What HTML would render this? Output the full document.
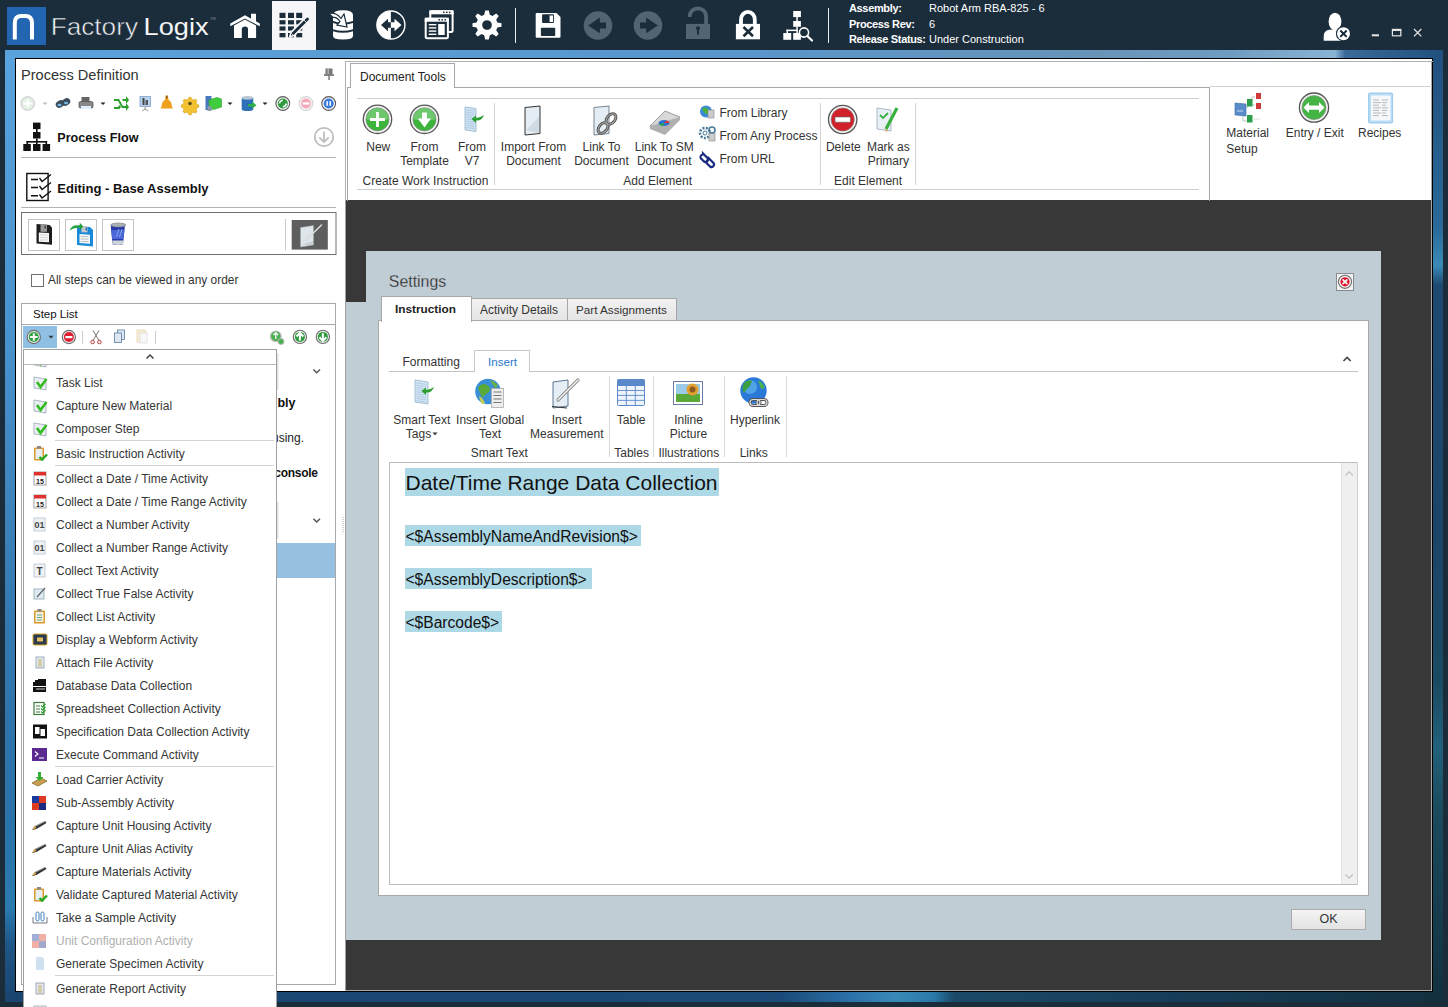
<!DOCTYPE html>
<html><head><meta charset="utf-8">
<style>
*{margin:0;padding:0;box-sizing:border-box}
html,body{width:1448px;height:1007px;overflow:hidden}
body{position:relative;background:#1b2d3b;font-family:"Liberation Sans",sans-serif;color:#222}
.a{position:absolute}
.t{position:absolute;white-space:nowrap;line-height:1}
svg{position:absolute;overflow:visible}
</style></head><body>

<!-- ===== TOP BAR ===== -->
<div class="a" style="left:7px;top:7px;width:39px;height:38px;background:#2265b1"></div>
<svg style="left:7px;top:7px" width="39" height="38"><path d="M7.8 32.6V16Q7.8 9 14.5 9H18.3Q25 9 25 16V32.6" fill="none" stroke="#fff" stroke-width="4"/></svg>
<svg style="left:0;top:0" width="230" height="50"><text x="50.7" y="35.2" font-family="Liberation Sans" font-size="24" textLength="87.3" lengthAdjust="spacingAndGlyphs" fill="#f0f3f5" stroke="#1b2d3b" stroke-width="0.55" style="paint-order:normal">Factory</text><text x="143.6" y="35.2" font-family="Liberation Sans" font-size="24" textLength="65" lengthAdjust="spacingAndGlyphs" fill="#f4f6f8">Logix</text><text x="210" y="20" font-family="Liberation Sans" font-size="4" fill="#889">TM</text></svg>

<div class="a" style="left:272px;top:1px;width:44px;height:49px;background:#f6f6f9"></div>


<!-- home -->
<svg style="left:0;top:0" width="1448" height="50">
<g fill="#fff">
<path d="M251 13.8h5v8l-5-2.6z"/>
<path d="M230.3 23.6L245 15.3L259.8 23.6L259.8 26.3L245 18.4L230.3 26.3z"/>
<path d="M234 25.5L245 19.6L256.1 25.5V38H248V29Q248 26.4 245 26.4Q241.8 26.4 241.8 29V38H234z"/>
</g>
<!-- grid pencil -->
<g fill="#1b2d3b">
<rect x="279.5" y="12.8" width="6" height="5.2"/><rect x="288" y="12.8" width="6" height="5.2"/><rect x="296.2" y="12.8" width="6" height="5.2"/>
<rect x="279.5" y="20.2" width="6" height="4.2"/><rect x="288" y="20.2" width="6" height="4.2"/><rect x="296.2" y="20.2" width="6" height="4.2"/>
<rect x="279.5" y="26.4" width="6" height="4.2"/><rect x="288" y="26.4" width="6" height="4.2"/><rect x="296.2" y="26.4" width="6" height="4.2"/>
<rect x="279.5" y="33" width="6" height="4.3"/><rect x="288" y="33" width="6" height="4.3"/><rect x="296.2" y="33" width="6" height="4.3"/>
</g>
<path d="M289.6 37L291.2 32.1L305.9 17.4Q307.5 16 309.1 17.4Q310.5 19 309.1 20.6L294.4 35.3z" fill="#1b2d3b" stroke="#f6f6f9" stroke-width="1.6" stroke-linejoin="round"/>
<path d="M303.6 19.7L306.8 22.9" stroke="#f6f6f9" stroke-width="0.9"/>
<path d="M291.5 33.5L293 35" stroke="#f6f6f9" stroke-width="0.7"/>
<!-- database -->
<g fill="#fff">
<path d="M333 15Q333 10.3 343 10.3Q353 10.3 353 15V21Q343 24.5 333 21z"/>
<path d="M333 23Q343 26.5 353 23V29.3Q343 32.3 333 29.3z"/>
<path d="M333 31.3Q343 34.3 353 31.3V36Q353 39.5 343 39.5Q333 39.5 333 36z"/>
</g>
<path d="M329 13.5Q336 12 341 18.5L344 14L347 27L337 25L340 21.5Q337 17 333 17.5z" fill="#fff" stroke="#1b2d3b" stroke-width="1.2"/>
<!-- circle arrows -->
<circle cx="390.9" cy="25" r="14" fill="#1b2d3b" stroke="#fff" stroke-width="1.4"/>
<path d="M390.9 11A14 14 0 0 0 390.9 39z" fill="#fff"/>
<path d="M381 25L388 18.8V22.2H390.9V27.8H388V31.2z" fill="#1b2d3b"/>
<path d="M401.5 25L394.5 18.8V22.2H390.9V27.8H394.5V31.2z" fill="#fff"/>
<!-- windows -->
<rect x="430.3" y="11.3" width="22.3" height="20.7" rx="1.5" fill="none" stroke="#fff" stroke-width="2"/>
<rect x="429.3" y="10.3" width="24.3" height="4" fill="#fff"/>
<rect x="425.7" y="18.7" width="22.2" height="19.5" rx="1.5" fill="#1b2d3b" stroke="#fff" stroke-width="2"/>
<rect x="424.7" y="17.7" width="24.2" height="4" fill="#fff"/>
<g fill="#1b2d3b"><rect x="443" y="11.6" width="1.5" height="1.5"/><rect x="446" y="11.6" width="1.5" height="1.5"/><rect x="449" y="11.6" width="1.5" height="1.5"/>
<rect x="438.5" y="19" width="1.5" height="1.5"/><rect x="441.5" y="19" width="1.5" height="1.5"/><rect x="444.5" y="19" width="1.5" height="1.5"/></g>
<g fill="#fff"><rect x="428.8" y="24" width="7.5" height="1.4"/><rect x="428.8" y="27.2" width="7.5" height="1.4"/><rect x="428.8" y="30.4" width="7.5" height="1.4"/><rect x="428.8" y="33.6" width="7.5" height="1.4"/><rect x="438.2" y="24" width="6.5" height="11"/></g>
<!-- gear -->
<g transform="translate(487 25)">
<path fill="#fff" fill-rule="evenodd" d="M-1.8-14.5H1.8L2.8-10.2L5.5-9L9.2-11.5L11.7-9L9.2-5.3L10.4-2.6L14.5-1.8V1.8L10.4 2.6L9.2 5.3L11.7 9L9.2 11.5L5.5 9L2.8 10.2L1.8 14.5H-1.8L-2.8 10.2L-5.5 9L-9.2 11.5L-11.7 9L-9.2 5.3L-10.4 2.6L-14.5 1.8V-1.8L-10.4-2.6L-9.2-5.3L-11.7-9L-9.2-11.5L-5.5-9L-2.8-10.2z M0-4.8A4.8 4.8 0 1 0 0.01 -4.8z"/>
</g>
<!-- save -->
<path d="M535.7 14Q535.7 13 536.7 13H556.5L560.5 17V36.8Q560.5 37.8 559.5 37.8H536.7Q535.7 37.8 535.7 36.8z" fill="#fff"/>
<rect x="542.1" y="14.3" width="11.8" height="8.7" rx="0.8" fill="#1b2d3b"/>
<rect x="549.6" y="15.5" width="3.4" height="6.5" fill="#fff"/>
<rect x="540.9" y="27.7" width="14.3" height="8.4" rx="0.8" fill="#1b2d3b"/>
<!-- back / forward -->
<circle cx="598" cy="25.5" r="14.3" fill="#526371"/>
<path d="M588.1 25.5L599.9 17.4V22.4H606V28.6H599.9V33.3z" fill="#1b2d3b"/>
<circle cx="648" cy="25.5" r="14.3" fill="#526371"/>
<path d="M657.9 25.5L646.1 17.4V22.4H640V28.6H646.1V33.3z" fill="#1b2d3b"/>
<!-- open lock -->
<path d="M689.7 17V16.5A8.2 8.2 0 0 1 706.1 16.5V24" fill="none" stroke="#526371" stroke-width="3.8"/>
<rect x="686" y="23.9" width="24" height="15.1" fill="#526371"/>
<circle cx="698" cy="28.3" r="2" fill="#1b2d3b"/><rect x="697" y="28.5" width="2" height="6" fill="#1b2d3b"/>
<!-- lock x -->
<path d="M741 24V19.5A6.8 7.5 0 0 1 754.8 19.5V24" fill="none" stroke="#fff" stroke-width="3.8"/>
<rect x="735.9" y="23.9" width="24.1" height="15.4" fill="#fff"/>
<path d="M743.5 27L753 36.2M753 27L743.5 36.2" stroke="#1b2d3b" stroke-width="2.6"/>
<!-- hierarchy search -->
<g fill="#fff"><rect x="793.2" y="11" width="7.7" height="6.1"/><rect x="793.2" y="21" width="7.7" height="5.8"/><rect x="783.3" y="33" width="7.9" height="6.8"/><rect x="793.2" y="33" width="7.7" height="6.8"/>
<rect x="796.3" y="17" width="1.5" height="4"/><rect x="796.3" y="26.8" width="1.5" height="6.2"/><rect x="786.5" y="29.6" width="11" height="1.5"/><rect x="786.5" y="29.6" width="1.5" height="3.4"/></g>
<circle cx="804" cy="32.5" r="4.6" fill="#1b2d3b" stroke="#fff" stroke-width="1.6"/>
<path d="M807.3 36L812 40.5" stroke="#fff" stroke-width="2.2" stroke-linecap="round"/>
<!-- user x -->
<ellipse cx="1335" cy="21.5" rx="6.4" ry="8.7" fill="#fff"/>
<path d="M1323.7 40.7V36Q1323.7 31 1329 29.8L1335 29.5L1341 30L1345 33V40.7z" fill="#fff"/>
<circle cx="1343.5" cy="33.7" r="7.6" fill="#1b2d3b"/>
<circle cx="1343.5" cy="33.7" r="6.5" fill="#fff"/>
<path d="M1340.3 30.5L1346.7 36.9M1346.7 30.5L1340.3 36.9" stroke="#1b2d3b" stroke-width="2"/>
<!-- window controls -->
<rect x="1371.8" y="34.3" width="7.2" height="2" fill="#e6e6e6"/>
<rect x="1392.4" y="29.4" width="8.4" height="6.4" fill="none" stroke="#e6e6e6" stroke-width="1.2"/>
<rect x="1392" y="29" width="9.2" height="2" fill="#e6e6e6"/>
<path d="M1414 29L1421.3 36.3M1421.3 29L1414 36.3" stroke="#e6e6e6" stroke-width="1.2"/>
</svg>

<div class="a" style="left:515px;top:8px;width:1px;height:35px;background:#e8ecef"></div>
<div class="a" style="left:828px;top:8px;width:1px;height:35px;background:#e8ecef"></div>

<div class="t" style="left:849px;top:1.2px;font-size:11px;line-height:15.5px;color:#fff;font-weight:bold;letter-spacing:-0.35px">Assembly:<br>Process Rev:<br>Release Status:</div>
<div class="t" style="left:929px;top:1.2px;font-size:11px;line-height:15.5px;color:#fff">Robot Arm RBA-825 - 6<br>6<br>Under Construction</div>

<!-- ===== WINDOW FRAME ===== -->
<div class="a" style="left:5px;top:50px;width:1438px;height:9px;background:linear-gradient(90deg,#5aa2dc 0%,#5896cc 50%,#6894b8 76%,#6e9cc0 85%,#8ab4d4 92.5%,#3a6a98 93.2%,#22507e 100%)"></div>
<div class="a" style="left:5px;top:58px;width:11px;height:944px;background:linear-gradient(180deg,#5aa2dc 0%,#4a92cc 30%,#3478b0 60%,#2a72a8 80%,#2a7ab0 90%,#1e5585 94%,#1a4570 100%)"></div>
<div class="a" style="left:1433px;top:58px;width:10px;height:944px;background:linear-gradient(180deg,#22507e 0%,#2a6a98 18%,#3a8ab8 22%,#1e4a72 24%,#1c4468 50%,#1a4a62 66%,#22607a 73%,#1a4a5c 80%,#12303f 100%)"></div>
<div class="a" style="left:5px;top:991px;width:1438px;height:11px;background:linear-gradient(90deg,#1a4570 0%,#1b4a78 54%,#2a70a8 58.7%,#3a8ab8 62%,#2a78a8 64.6%,#1a4a68 66%,#173e5a 80%,#12303f 100%)"></div>
<div class="a" style="left:15px;top:58px;width:1418px;height:934px;border:1px solid #000;background:#fff"></div>
<div class="a" style="left:1431px;top:61px;width:1px;height:930px;background:#a8a8a8"></div>

<!-- dark work area -->
<div class="a" style="left:345px;top:200px;width:1086px;height:791px;background:#383838;border-left:1px solid #a0a0a0;border-bottom:1px solid #a8a8a8"></div>


<!--DLGFRAG-->
<!-- ===== SETTINGS DIALOG ===== -->
<div class="a" style="left:366px;top:251px;width:1015px;height:52px;background:#c1cdd5"></div>
<div class="a" style="left:346px;top:302px;width:1035px;height:638px;background:#c1cdd5"></div>
<svg style="left:0;top:0" width="500" height="300"><text x="388.8" y="287" font-family="Liberation Sans" font-size="17.4" textLength="57.4" lengthAdjust="spacingAndGlyphs" fill="#262626" stroke="#c1cdd5" stroke-width="0.3">Settings</text></svg>
<div class="a" style="left:1336px;top:273px;width:18px;height:18px;border:1px solid #858b90;background:#f2f2f2"></div>
<div class="a" style="left:471px;top:298px;width:97px;height:23px;border:1px solid #a6a6a6;background:linear-gradient(#f2f2f2,#e4e4e4)"></div>
<div class="a" style="left:567px;top:298px;width:110px;height:23px;border:1px solid #a6a6a6;background:linear-gradient(#f2f2f2,#e4e4e4)"></div>
<div class="a" style="left:378px;top:320px;width:991px;height:576px;background:#fff;border:1px solid #a8a8a8"></div>
<div class="a" style="left:381px;top:296px;width:91px;height:26px;border:1px solid #a8a8a8;border-bottom:none;background:#fff"></div>
<div class="t" style="left:395px;top:303.5px;font-size:11.8px;font-weight:bold;color:#222">Instruction</div>
<div class="t" style="left:480px;top:303.5px;font-size:12px;color:#333">Activity Details</div>
<div class="t" style="left:576px;top:303.5px;font-size:11.7px;color:#333">Part Assignments</div>
<div class="a" style="left:389px;top:371px;width:969px;height:1px;background:#c4c4c4"></div>
<div class="a" style="left:474px;top:349.5px;width:56px;height:22.5px;border:1px solid #c8c8c8;border-bottom:none;background:#fff"></div>
<div class="t" style="left:402.5px;top:356.3px;font-size:12px;color:#333">Formatting</div>
<div class="t" style="left:488px;top:356.3px;font-size:11.6px;color:#2a78c8">Insert</div>
<div class="a" style="left:609px;top:376px;width:1px;height:81px;background:#d8d8d8"></div>
<div class="a" style="left:653px;top:376px;width:1px;height:81px;background:#d8d8d8"></div>
<div class="a" style="left:724px;top:376px;width:1px;height:81px;background:#d8d8d8"></div>
<div class="a" style="left:786px;top:376px;width:1px;height:81px;background:#d8d8d8"></div>
<div class="t" style="left:271.8px;width:300px;text-align:center;top:414.0px;font-size:12px;color:#333">Smart Text</div>
<div class="t" style="left:271.8px;width:300px;text-align:center;top:428.4px;font-size:12px;color:#333">Tags&nbsp;&nbsp;</div>
<div class="t" style="left:340.1px;width:300px;text-align:center;top:414.0px;font-size:12px;color:#333">Insert Global</div>
<div class="t" style="left:340.1px;width:300px;text-align:center;top:428.4px;font-size:12px;color:#333">Text</div>
<div class="t" style="left:416.79999999999995px;width:300px;text-align:center;top:414.0px;font-size:12px;color:#333">Insert</div>
<div class="t" style="left:416.79999999999995px;width:300px;text-align:center;top:428.4px;font-size:12px;color:#333">Measurement</div>
<div class="t" style="left:481.20000000000005px;width:300px;text-align:center;top:414.0px;font-size:12px;color:#333">Table</div>
<div class="t" style="left:538.5px;width:300px;text-align:center;top:414.0px;font-size:12px;color:#333">Inline</div>
<div class="t" style="left:538.5px;width:300px;text-align:center;top:428.4px;font-size:12px;color:#333">Picture</div>
<div class="t" style="left:605px;width:300px;text-align:center;top:414.0px;font-size:12px;color:#333">Hyperlink</div>
<div class="t" style="left:349.3px;width:300px;text-align:center;top:447.4px;font-size:12px;color:#333">Smart Text</div>
<div class="t" style="left:481.6px;width:300px;text-align:center;top:447.4px;font-size:12px;color:#333">Tables</div>
<div class="t" style="left:538.8px;width:300px;text-align:center;top:447.4px;font-size:12px;color:#333">Illustrations</div>
<div class="t" style="left:603.7px;width:300px;text-align:center;top:447.4px;font-size:12px;color:#333">Links</div>
<div class="a" style="left:389px;top:462px;width:969px;height:423px;border:1px solid #bdbdbd;border-right:none;background:#fff"></div>
<div class="a" style="left:1341px;top:463px;width:17px;height:421px;background:#f0f0f0;border-left:1px solid #e4e4e4;border-right:1px solid #d8d8d8"></div>
<div class="a" style="left:1357px;top:462px;width:1px;height:423px;background:#d0d0d0"></div>
<div class="a" style="left:405px;top:467.8px;width:314px;height:28.2px;background:#add8e6"></div>
<div class="t" style="left:405.5px;top:472.2px;font-size:21px;color:#111">Date/Time Range Data Collection</div>
<div class="a" style="left:405px;top:525.1px;width:236px;height:20.5px;background:#add8e6"></div>
<div class="t" style="left:405.5px;top:528.5px;font-size:15.6px;color:#111">&lt;$AssemblyNameAndRevision$&gt;</div>
<div class="a" style="left:405px;top:567.9px;width:187.2px;height:20.8px;background:#add8e6"></div>
<div class="t" style="left:405.5px;top:571.5px;font-size:15.6px;color:#111">&lt;$AssemblyDescription$&gt;</div>
<div class="a" style="left:405px;top:611px;width:97.2px;height:20.8px;background:#add8e6"></div>
<div class="t" style="left:405.5px;top:614.6px;font-size:15.6px;color:#111">&lt;$Barcode$&gt;</div>
<div class="a" style="left:1291px;top:908.5px;width:75px;height:21px;border:1px solid #acacac;background:linear-gradient(#f4f4f4,#e2e2e2)"></div>
<div class="t" style="left:1291px;width:75px;text-align:center;top:912.6px;font-size:12.5px;color:#333">OK</div>
<svg style="left:0;top:0" width="1448" height="1007">
<circle cx="1345" cy="281.8" r="6.6" fill="#f4f4f4" stroke="#6a6a6a" stroke-width="1.1"/><circle cx="1345" cy="281.8" r="4.6" fill="#e0102a"/><path d="M1342.6 279.4l4.8 4.8M1347.4 279.4l-4.8 4.8" stroke="#f4f4f4" stroke-width="1.8"/>
<path d="M1343.5 361l3.6-3.6 3.6 3.6" stroke="#444" stroke-width="1.6" fill="none"/>
<path d="M415 380l13 2v22l-13-2z" fill="#d4e6f8" stroke="#8ab" stroke-width="0.7"/>
<g stroke="#9bc" stroke-width="0.6"><path d="M416.5 383.0l10 1.4"/><path d="M416.5 385.2l10 1.4"/><path d="M416.5 387.4l10 1.4"/><path d="M416.5 389.6l10 1.4"/><path d="M416.5 391.8l10 1.4"/><path d="M416.5 394.0l10 1.4"/><path d="M416.5 396.2l10 1.4"/><path d="M416.5 398.4l10 1.4"/><path d="M416.5 400.6l10 1.4"/></g>
<path d="M434 387q-2 6-8 5.5v2.5l-4.5-4 4.5-3.5v2.5q4 0 8-3z" fill="#2aa030"/>
<circle cx="488" cy="391.5" r="12.8" fill="#3a90d8"/><path d="M478 388q4-6 9-3t2 7q-4 2-6 6q-3-4-5-10z" fill="#5aaa3a"/><path d="M490 380q5 1 8 6l-3 2q-3-4-5-8z" fill="#6ab04a"/><path d="M479 396q4 2 6 7l-3 1q-2-3-3-8z" fill="#c8d050"/>
<rect x="491.5" y="388.5" width="12" height="19" fill="#eee" stroke="#aaa" stroke-width="0.8"/><g stroke="#777" stroke-width="1"><path d="M493.5 392.0h8"/><path d="M493.5 395.5h8"/><path d="M493.5 399.0h8"/><path d="M493.5 402.5h8"/></g>
<path d="M553 382l15-2v26l-15 2z" fill="#e4eef4" stroke="#4a6a88" stroke-width="0.9"/><path d="M552 406.5l15 1.5" stroke="#333" stroke-width="1.2"/><path d="M558 400l20-20" stroke="#888" stroke-width="3.2" stroke-linecap="round"/><path d="M558 400l20-20" stroke="#eee" stroke-width="1.6" stroke-linecap="round"/>
<rect x="617.5" y="379.5" width="27" height="26" rx="1" fill="#eef4fc" stroke="#5a88c8" stroke-width="1"/><rect x="617.5" y="379.5" width="27" height="6.5" fill="#5a88c8"/><g stroke="#5a88c8" stroke-width="0.9"><path d="M626.3 386v19.5M635.3 386v19.5M617.5 390.5h27M617.5 395.4h27M617.5 400.4h27"/></g>
<rect x="673.5" y="381.5" width="29" height="23" fill="#fff" stroke="#6a7aa8" stroke-width="1"/><rect x="676" y="384" width="24" height="18" fill="#9ccbe8"/><rect x="676" y="394" width="24" height="8" fill="#5aa83a"/><circle cx="692.5" cy="389.5" r="6" fill="#e0a030"/><circle cx="692.5" cy="389.5" r="3" fill="#8a5a20"/>
<circle cx="753.5" cy="390.5" r="13.2" fill="#2a78d8"/><circle cx="750" cy="387" r="7" fill="#6ac0f0" opacity="0.6"/><path d="M744 383q4-4 8-2l-2 5q-4 3-6 7q-3-5 0-10z" fill="#3aa040"/><path d="M758 380q5 2 7 8l-4 1z" fill="#4ab050"/>
<g fill="none" stroke="#555" stroke-width="3"><rect x="750" y="399.5" width="10" height="6" rx="3"/><rect x="757" y="399.5" width="10" height="6" rx="3"/></g><g fill="none" stroke="#ddd" stroke-width="1.2"><rect x="750" y="399.5" width="10" height="6" rx="3"/><rect x="757" y="399.5" width="10" height="6" rx="3"/></g>
<path d="M1345.5 475.5l3.7-3.7 3.7 3.7" stroke="#c0c0c0" stroke-width="1.2" fill="none"/>
<path d="M1345.5 874.5l3.7 3.7 3.7-3.7" stroke="#c0c0c0" stroke-width="1.2" fill="none"/>
<path d="M432.5 432.5h5l-2.5 2.8z" fill="#333"/>
</svg>
<!--/DLGFRAG-->
<!--DOCFRAG-->
<!-- ===== DOCUMENT TOOLS ===== -->
<div class="a" style="left:345px;top:61px;width:1088px;height:1px;background:#b0b0b0"></div>
<div class="a" style="left:345px;top:61px;width:1px;height:140px;background:#b0b0b0"></div>
<div class="a" style="left:350px;top:63px;width:105px;height:25px;border:1px solid #a8a8a8;border-bottom:none;background:#fff"></div>
<div class="a" style="left:454px;top:87px;width:756px;height:1px;background:#a8a8a8"></div>
<div class="a" style="left:347px;top:87px;width:4px;height:1px;background:#a8a8a8"></div>
<div class="a" style="left:347px;top:87px;width:1px;height:114px;background:#a8a8a8"></div>
<div class="a" style="left:1209px;top:87px;width:1px;height:114px;background:#a8a8a8"></div>
<div class="a" style="left:1210px;top:86px;width:222px;height:1px;background:#d0d0d0"></div>
<div class="t" style="left:360px;top:70.6px;font-size:12px;color:#222">Document Tools</div>
<div class="a" style="left:357px;top:98px;width:842px;height:1px;background:#cfcfcf"></div>
<div class="a" style="left:357px;top:189px;width:842px;height:1px;background:#cfcfcf"></div>
<div class="a" style="left:494px;top:103px;width:1px;height:82px;background:#d4d4d4"></div>
<div class="a" style="left:820px;top:103px;width:1px;height:82px;background:#d4d4d4"></div>
<div class="a" style="left:915px;top:103px;width:1px;height:82px;background:#d4d4d4"></div>
<div class="t" style="left:228.3px;width:300px;text-align:center;top:140.6px;font-size:12px;color:#333">New</div>
<div class="t" style="left:274.5px;width:300px;text-align:center;top:140.6px;font-size:12px;color:#333">From</div>
<div class="t" style="left:274.5px;width:300px;text-align:center;top:155.1px;font-size:12px;color:#333">Template</div>
<div class="t" style="left:322px;width:300px;text-align:center;top:140.6px;font-size:12px;color:#333">From</div>
<div class="t" style="left:322px;width:300px;text-align:center;top:155.1px;font-size:12px;color:#333">V7</div>
<div class="t" style="left:275.5px;width:300px;text-align:center;top:174.7px;font-size:12px;color:#333">Create Work Instruction</div>
<div class="t" style="left:383.5px;width:300px;text-align:center;top:140.6px;font-size:12px;color:#333">Import From</div>
<div class="t" style="left:383.5px;width:300px;text-align:center;top:155.1px;font-size:12px;color:#333">Document</div>
<div class="t" style="left:451.5px;width:300px;text-align:center;top:140.6px;font-size:12px;color:#333">Link To</div>
<div class="t" style="left:451.5px;width:300px;text-align:center;top:155.1px;font-size:12px;color:#333">Document</div>
<div class="t" style="left:514.3px;width:300px;text-align:center;top:140.6px;font-size:12px;color:#333">Link To SM</div>
<div class="t" style="left:514.3px;width:300px;text-align:center;top:155.1px;font-size:12px;color:#333">Document</div>
<div class="t" style="left:507.70000000000005px;width:300px;text-align:center;top:174.5px;font-size:12px;color:#333">Add Element</div>
<div class="t" style="left:693.3px;width:300px;text-align:center;top:140.6px;font-size:12px;color:#333">Delete</div>
<div class="t" style="left:738.3px;width:300px;text-align:center;top:140.6px;font-size:12px;color:#333">Mark as</div>
<div class="t" style="left:738.3px;width:300px;text-align:center;top:155.1px;font-size:12px;color:#333">Primary</div>
<div class="t" style="left:718.1px;width:300px;text-align:center;top:174.5px;font-size:12px;color:#333">Edit Element</div>
<div class="t" style="left:719.4px;top:106.9px;font-size:12px;color:#333">From Library</div>
<div class="t" style="left:719.4px;top:129.7px;font-size:12px;color:#333">From Any Process</div>
<div class="t" style="left:719.4px;top:152.5px;font-size:12px;color:#333">From URL</div>
<div class="t" style="left:1226.3px;top:126.3px;font-size:12px;line-height:15.2px;color:#333">Material<br>Setup</div>
<div class="t" style="left:1164.8px;width:300px;text-align:center;top:127.3px;font-size:12px;color:#333">Entry / Exit</div>
<div class="t" style="left:1229.7px;width:300px;text-align:center;top:127.3px;font-size:12px;color:#333">Recipes</div>
<svg style="left:0;top:0" width="1448" height="210">
<circle cx="377.5" cy="119.3" r="14.2" fill="#f4f4f4" stroke="#555" stroke-width="1.3"/><circle cx="377.5" cy="119.3" r="11.6" fill="#3cb43c" stroke="#888" stroke-width="0.6"/><path d="M366.3 119.3A11.2 11.2 0 0 1 388.7 119.3Q377.5 122.3 366.3 119.3z" fill="#fff" opacity="0.25"/>
<path d="M377.5 112v15M370 119.5h15" stroke="#fff" stroke-width="2.8"/>
<circle cx="424.5" cy="119.3" r="14.2" fill="#f4f4f4" stroke="#555" stroke-width="1.3"/><circle cx="424.5" cy="119.3" r="11.6" fill="#3cb43c" stroke="#888" stroke-width="0.6"/><path d="M413.3 119.3A11.2 11.2 0 0 1 435.7 119.3Q424.5 122.3 413.3 119.3z" fill="#fff" opacity="0.25"/>
<path d="M422 112.5h5v6h4l-6.5 9-6.5-9h4z" fill="#fff"/>
<path d="M465 107l11 1.5v23l-11-1.5z" fill="#cfe2f6" stroke="#8ab" stroke-width="0.7"/>
<g stroke="#9bc" stroke-width="0.6"><path d="M466.5 110.0l8 1"/><path d="M466.5 112.2l8 1"/><path d="M466.5 114.4l8 1"/><path d="M466.5 116.6l8 1"/><path d="M466.5 118.8l8 1"/><path d="M466.5 121.0l8 1"/><path d="M466.5 123.2l8 1"/><path d="M466.5 125.4l8 1"/><path d="M466.5 127.6l8 1"/></g>
<path d="M484 115q-2 6-8 5.5v2.5l-4.5-4 4.5-3.5v2.5q4 0 8-3z" fill="#2aa030"/>
<path d="M525 107.5l15-1.5v27.5l-15 1.5z" fill="#e4edf3" stroke="#333" stroke-width="1"/><path d="M526 130l13-13v16z" fill="#cfdbe4"/>
<path d="M594 107.5l15-1.5v27.5l-15 1.5z" fill="#e4edf3" stroke="#6a7a88" stroke-width="0.9"/>
<g fill="none" stroke="#555" stroke-width="3"><ellipse cx="611" cy="119" rx="4" ry="6" transform="rotate(40 611 119)"/><ellipse cx="603" cy="128" rx="4" ry="6" transform="rotate(40 603 128)"/></g>
<g fill="none" stroke="#aaa" stroke-width="1"><ellipse cx="611" cy="119" rx="4" ry="6" transform="rotate(40 611 119)"/><ellipse cx="603" cy="128" rx="4" ry="6" transform="rotate(40 603 128)"/></g>
<path d="M650 126l15-15 15 6-15 15z" fill="#d8d8d8" stroke="#888" stroke-width="0.8"/><path d="M650 126v3l15 6 15-15v-3" fill="#b0b0b0"/><ellipse cx="664" cy="123" rx="5.5" ry="3" fill="#2a70d0"/><path d="M664 123l5.5 0a5.5 3 0 0 0 -3-2.6z" fill="#e03030"/><path d="M664 123l-5 1.5a5.5 3 0 0 0 4 1.5z" fill="#30b030"/>
<circle cx="706" cy="111.5" r="6" fill="#3a8ad8"/><path d="M702 109q3-3 6 0t-1 5q-3 0-5-5z" fill="#4ab040"/><rect x="708" y="110" width="6" height="8" fill="#ccc" stroke="#888" stroke-width="0.6"/>
<g transform="translate(705 133)"><circle r="5" fill="none" stroke="#4a7a9a" stroke-width="2.5" stroke-dasharray="2 1.4"/><circle r="2" fill="#fff" stroke="#4a7a9a" stroke-width="1"/></g><rect x="709" y="133" width="6" height="8" fill="#ccc" stroke="#888" stroke-width="0.6"/><circle cx="712" cy="130" r="3" fill="none" stroke="#4a7a9a" stroke-width="1.6"/>
<g fill="none" stroke="#1a2a80" stroke-width="2.2"><path d="M703 153.5l4.5 4.5a2.5 2.5 0 0 1 -3.5 3.5l-3-3a2.5 2.5 0 0 1 2-4z"/><path d="M709 158.5l4.5 4.5a2.5 2.5 0 0 1 -3.5 3.5l-3-3a2.5 2.5 0 0 1 2-4z"/></g>
<circle cx="842.7" cy="119.5" r="14.2" fill="#f4f4f4" stroke="#555" stroke-width="1.3"/><circle cx="842.7" cy="119.5" r="11.6" fill="#d0202a" stroke="#888" stroke-width="0.6"/><rect x="835" y="117" width="15.4" height="5.2" rx="0.8" fill="#fff" stroke="#666" stroke-width="0.6"/>
<path d="M877 108l14 2v21l-14-2z" fill="#e8f0f6" stroke="#9ab" stroke-width="0.8"/><path d="M880 115l3 3 5-5" stroke="#3ab040" stroke-width="1.8" fill="none"/><path d="M886 129l11-21" stroke="#3ab040" stroke-width="3.2"/><path d="M886 129l-0.5 3.5 2.5-2.5" fill="#d8a040"/>
<path d="M1240 113h3v-6h5M1243 113v8h5M1249 101h3v-4h3M1249 101v4h6M1249 121v0" stroke="#c4c4c4" stroke-width="1" fill="none"/><path d="M1235 103l11 1v12l-11-1z" fill="#5a8ccc" stroke="#3a6aa8" stroke-width="0.6"/><path d="M1237 111h6" stroke="#cde" stroke-width="1"/><rect x="1247" y="99" width="5.5" height="7.5" fill="#2aa04a"/><rect x="1256" y="93" width="5" height="6" fill="#d03a3a"/><rect x="1256" y="103" width="5" height="6" fill="#d03a3a"/><rect x="1247" y="115" width="5.5" height="7.5" fill="#2aa04a"/><path d="M1252.5 119h8" stroke="#ddd" stroke-width="1"/>
<circle cx="1314" cy="107.6" r="14.6" fill="#f4f4f4" stroke="#555" stroke-width="1.3"/><circle cx="1314" cy="107.6" r="12" fill="#44b444" stroke="#888" stroke-width="0.6"/><path d="M1303.5 107.6l5.5-5.5v3.3h10v-3.3l5.5 5.5-5.5 5.5v-3.3h-10v3.3z" fill="#fff"/>
<rect x="1368.6" y="93" width="24" height="30" rx="1" fill="#b8dcf4" stroke="#8ac0e4" stroke-width="0.8"/><rect x="1371" y="95.5" width="19.5" height="25" fill="#f4f8fb"/><g stroke="#a8a8a8" stroke-width="0.8"><path d="M1373 100.0h6M1382 100.0h6"/><path d="M1373 102.6h8M1382 102.6h5"/><path d="M1373 105.2h6M1382 105.2h4"/><path d="M1373 107.8h8M1382 107.8h6"/><path d="M1373 110.4h6M1382 110.4h5"/><path d="M1373 113.0h8M1382 113.0h4"/><path d="M1373 115.6h6M1382 115.6h6"/></g>
</svg>
<!--/DOCFRAG-->
<!-- ===== LEFT PANEL ===== -->
<div class="t" style="left:21px;top:67.6px;font-size:14.6px;color:#333">Process Definition</div>
<svg style="left:0;top:0" width="350" height="300">
<!-- pin -->
<path d="M325.5 68.5h7v6h-7z" fill="#777"/><rect x="327.5" y="68.5" width="1.4" height="6" fill="#bbb"/><rect x="324" y="74.3" width="10" height="1.5" fill="#666"/><rect x="328.4" y="75.5" width="1.3" height="4.5" fill="#666"/>
<!-- toolbar row -->
<circle cx="27.7" cy="103.5" r="6.8" fill="#e3efe3" stroke="#c8c8c8" stroke-width="1"/><path d="M27.7 99.5v8M23.7 103.5h8" stroke="#fff" stroke-width="2"/>
<path d="M42.5 102.5h5l-2.5 2.5z" fill="#bbb"/>
<g fill="#3c4c5c"><ellipse cx="60" cy="104" rx="4.5" ry="3.5" transform="rotate(-30 60 104)"/><ellipse cx="66" cy="102" rx="4.5" ry="3.5" transform="rotate(-30 66 102)"/></g><ellipse cx="59.5" cy="105" rx="2" ry="1.3" fill="#7ab8e8"/><ellipse cx="66" cy="103" rx="2" ry="1.3" fill="#7ab8e8"/>
<rect x="81.5" y="97" width="8" height="5" fill="#666"/><rect x="79" y="101.5" width="14" height="6.5" rx="1.5" fill="#888" stroke="#555" stroke-width="0.8"/><rect x="81" y="106" width="10" height="3" fill="#dfefff"/>
<path d="M100.5 102.5h5l-2.5 2.5z" fill="#222"/>
<path d="M114 99h5l4 7h3v-3l3 4-3 4v-3h-4l-4-7h-4zM114 107h4l1.5-2 1.5 2-1.5 2h-5.5zM122 99h4v-3l3 4-3 4v-3h-3z" fill="#2aa02a"/>
<rect x="140" y="96.5" width="10.5" height="10" fill="#b9d3ef" stroke="#7d9fc8" stroke-width="0.8"/><rect x="142.5" y="98" width="2" height="7" fill="#444"/><rect x="145.5" y="100" width="2.5" height="5" fill="#555"/><path d="M145.2 106.5v3M145.2 109l-3 2M145.2 109l3 2" stroke="#888" stroke-width="0.9"/>
<path d="M166.8 95.5q1.5 0 1.5 2v2q3.5 2 3.5 6.5l1.2 2.5h-12.5l1.2-2.5q0-4.5 3.5-6.5v-2q0-2 1.6-2z" fill="#f0a020"/><path d="M166.8 95.5v3" stroke="#8a5a20" stroke-width="1.5"/>
<g transform="translate(190 103.5) scale(0.78)"><path fill="#f2c230" stroke="#c89010" stroke-width="0.6" d="M-1.5-8h3l.8 2.5 2.3 1 2.3-1.3 2.2 2.2-1.3 2.3 1 2.3 2.5.8v3l-2.5.8-1 2.3 1.3 2.3-2.2 2.2-2.3-1.3-2.3 1-.8 2.5h-3l-.8-2.5-2.3-1-2.3 1.3-2.2-2.2 1.3-2.3-1-2.3-2.5-.8v-3l2.5-.8 1-2.3-1.3-2.3 2.2-2.2 2.3 1.3 2.3-1z"/><circle cx="0" cy="0" r="2.3" fill="#5a4a20"/></g>
<rect x="205.5" y="96" width="6" height="14" fill="#4a78c0"/><path d="M209 100l8-2.5 4.5 1.5v8l-8 2.5-4.5-1.5z" fill="#3fcc3f" stroke="#2a9a2a" stroke-width="0.6"/><rect x="207.5" y="106" width="4" height="5" fill="#8899aa"/>
<path d="M227.5 102.5h5l-2.5 2.5z" fill="#222"/>
<ellipse cx="247.5" cy="97.8" rx="5.8" ry="1.8" fill="#b7c4cf"/><path d="M241.7 97.8v11.5q0 1.8 5.8 1.8t5.8-1.8v-11.5q0 1.8-5.8 1.8t-5.8-1.8z" fill="#2d6fb8"/><path d="M248 104h4v-2.5l4.5 3.7-4.5 3.8v-2.5h-4z" fill="#2fb04a"/>
<path d="M262.5 102.5h5l-2.5 2.5z" fill="#222"/>
<circle cx="282.8" cy="103.5" r="6.9" fill="#f2f2f2" stroke="#5a5a5a" stroke-width="1.1"/><circle cx="282.8" cy="103.5" r="5" fill="#2e9a3e"/><path d="M279.5 103.5q0-3 3.3-3.3M286.1 103.5q0 3-3.3 3.3" stroke="#fff" stroke-width="1.5" fill="none"/>
<circle cx="306" cy="103.5" r="6.9" fill="#f6f6f6" stroke="#d4d4d4" stroke-width="1.1"/><circle cx="306" cy="103.5" r="5" fill="#f4a8b8"/><rect x="302.5" y="102.4" width="7" height="2.2" fill="#fff"/>
<circle cx="328.7" cy="103.5" r="6.9" fill="#f2f2f2" stroke="#5a5a5a" stroke-width="1.1"/><circle cx="328.7" cy="103.5" r="5" fill="#3a7ae0"/><rect x="326.4" y="101.2" width="1.5" height="4.6" fill="#fff"/><rect x="329.5" y="101.2" width="1.5" height="4.6" fill="#fff"/>
<!-- process flow icon -->
<g fill="#111"><rect x="33" y="122.6" width="7.5" height="6.5"/><rect x="33" y="132" width="7.5" height="6.5"/><rect x="23.3" y="144" width="7.5" height="7"/><rect x="33" y="144" width="7.5" height="7"/><rect x="42.6" y="144" width="7.5" height="7"/>
<rect x="36" y="128" width="1.6" height="4.5"/><rect x="36" y="138.5" width="1.6" height="5.5"/><rect x="26.5" y="141" width="20.6" height="1.6"/><rect x="26.5" y="141" width="1.6" height="3"/><rect x="45.5" y="141" width="1.6" height="3"/></g>
<circle cx="324" cy="137" r="9.2" fill="none" stroke="#bcbcbc" stroke-width="1.7"/><path d="M324 131.5v10.5M319.3 137.3l4.7 4.7 4.7-4.7" fill="none" stroke="#bcbcbc" stroke-width="1.7"/>
<rect x="21" y="157" width="315" height="1" fill="#b4b4b4"/>
<!-- editing icon -->
<rect x="26.8" y="173.5" width="21.3" height="27" fill="none" stroke="#111" stroke-width="1.4"/>
<g stroke="#111" stroke-width="1.4" fill="none"><path d="M31 179.5h7M31 187.5h7M31 195.8h7"/><path d="M39.5 178l2.5 3.5 9-7M39.5 186l2.5 3.5 9-7M39.5 194.5l2.5 3.5 9-7"/></g>
<rect x="21" y="207" width="315" height="1" fill="#b4b4b4"/>
<!-- toolbar box -->
<rect x="21.5" y="212.5" width="314.5" height="42" fill="#fff" stroke="#707070" stroke-width="1"/>
<rect x="28.5" y="219.5" width="31" height="31" fill="#fff" stroke="#c4c4c4"/>
<rect x="65.5" y="219.5" width="31" height="31" fill="#fff" stroke="#c4c4c4"/>
<rect x="102.5" y="219.5" width="31" height="31" fill="#fff" stroke="#c4c4c4"/>
<path d="M36.5 224l13 1 2.5 2.5v17.3l-15.5-1.3z" fill="#1e1e1e"/><path d="M38.8 232.5l10.2 0.6v9.2l-10.2-0.6z" fill="#fafafa"/><path d="M40 235h8M40 237.5h8M40 240h8" stroke="#bbb" stroke-width="0.6"/><path d="M40.5 224.3h6.5v7.5h-6.5z" fill="#9a9a9a"/><rect x="44.5" y="225.5" width="1.5" height="3" fill="#444"/>
<path d="M77 226l13 1 3 3v16.5l-16-1.5z" fill="#1a8ad8"/><path d="M79.5 234l10.5 0.7v9l-10.5-0.7z" fill="#f4f8fa"/><path d="M80.5 236.5h8M80.5 239h8M80.5 241.5h8" stroke="#999" stroke-width="0.6"/><rect x="81.5" y="226.3" width="6" height="6" fill="#c8c8c8"/><rect x="85.5" y="227.5" width="1.5" height="3" fill="#2a6ab8"/><path d="M69.8 230.8q1-6.5 10-5.5l0-2.5 3.5 3.7-3.5 3.5v-2.3q-6.5-0.5-10 3.1z" fill="#22a03a"/>
<path d="M110.7 225.5l1.8 18q0 1.5 5.3 1.5t5.3-1.5l1.8-18z" fill="#2838a8"/><path d="M111.2 230l1 9h11.2l1-9z" fill="#4a68d8"/><ellipse cx="118.3" cy="225" rx="7.6" ry="2" fill="#a8b0b8" stroke="#777" stroke-width="0.6"/><path d="M112.3 240.5h11.5l-0.4 3.8q-5.4 1.5-10.8 0z" fill="#d0d4d8"/><path d="M116.5 237l2.5-8M119.5 237l2.5-8" stroke="#9ab0f0" stroke-width="0.8"/>
<rect x="285" y="219" width="1" height="31" fill="#c8c8c8"/>
<rect x="291.7" y="220" width="36.1" height="29.6" fill="#5e5e5e"/>
<path d="M300.5 227.5l13-2v19.5l-13 2z" fill="#dfe6ea" stroke="#9aa" stroke-width="0.5"/><path d="M301 245l12-4v4z" fill="#c8d0d6"/><path d="M306 240l15.5-15" stroke="#c8c8c8" stroke-width="1.6" stroke-linecap="round"/><path d="M306 240l15.5-15" stroke="#fff" stroke-width="0.6"/>
<!-- checkbox -->
<rect x="31.5" y="274.5" width="12" height="12" fill="#fff" stroke="#707070"/>
</svg>
<div class="t" style="left:57.3px;top:131.8px;font-size:12.6px;font-weight:bold;color:#111">Process Flow</div>
<div class="t" style="left:57.3px;top:181.8px;font-size:13px;font-weight:bold;color:#111">Editing - Base Assembly</div>
<div class="t" style="left:48px;top:274.6px;font-size:11.9px;color:#333">All steps can be viewed in any order</div>

<!--LEFTFRAG-->
<!-- ===== STEP LIST ===== -->
<div class="a" style="left:21px;top:303px;width:315px;height:682px;border:1px solid #a8a8a8"></div>
<div class="a" style="left:22px;top:324px;width:313px;height:1px;background:#a8a8a8"></div>
<div class="t" style="left:33px;top:309px;font-size:11.5px;color:#111">Step List</div>
<div class="a" style="left:23px;top:326px;width:34px;height:22px;background:#90bfe4"></div>
<div class="a" style="left:276px;top:543px;width:59px;height:35px;background:#95c0e2"></div>
<div class="t" style="right:1152.5px;top:396.8px;font-size:12.5px;font-weight:bold;color:#111">Assembly</div>
<div class="t" style="right:1144px;top:432.2px;font-size:12px;color:#222">housing.</div>
<div class="t" style="right:1130.4px;top:466.8px;font-size:12px;font-weight:bold;color:#111;letter-spacing:-0.3px">console</div>
<svg style="left:0;top:0" width="350" height="1007">
<circle cx="33.8" cy="337" r="6.6" fill="#f2f2f2" stroke="#6a6a6a" stroke-width="1.1"/><circle cx="33.8" cy="337" r="5" fill="#2ea040"/><path d="M33.8 333.3v7.4M30.1 337h7.4" stroke="#fff" stroke-width="2"/>
<path d="M48.5 335.8h5l-2.5 2.7z" fill="#333"/>
<circle cx="68.9" cy="337" r="6.6" fill="#f2f2f2" stroke="#6a6a6a" stroke-width="1.1"/><circle cx="68.9" cy="337" r="5" fill="#e02030"/><rect x="65.4" y="336" width="7" height="2.2" fill="#fff"/>
<rect x="82" y="331" width="1" height="13" fill="#ccc"/><rect x="155" y="331" width="1" height="13" fill="#ccc"/>
<path d="M93 330.5l6 10M99 330.5l-6 10" stroke="#666" stroke-width="0.9"/><circle cx="92.6" cy="342" r="1.8" fill="none" stroke="#c04040" stroke-width="1"/><circle cx="99.4" cy="342" r="1.8" fill="none" stroke="#c04040" stroke-width="1"/>
<rect x="117.5" y="330" width="7" height="9.5" fill="#dde8f2" stroke="#6a88a8" stroke-width="0.9"/><rect x="114.5" y="333" width="7" height="9.5" fill="#dde8f2" stroke="#6a88a8" stroke-width="0.9"/>
<rect x="137" y="330" width="8.5" height="12" fill="#f6eed8" stroke="#e8d8b0" stroke-width="0.8"/><rect x="140" y="333" width="7" height="10" fill="#f8f8f8" stroke="#ddd" stroke-width="0.8"/>
<circle cx="275.8" cy="336.3" r="5.3" fill="#4ab050" stroke="#bbb" stroke-width="1.2"/><path d="M275.8 333v6M273.5 335l2.3-2.3 2.3 2.3" stroke="#fff" stroke-width="1.3" fill="none"/><circle cx="281" cy="341.5" r="3" fill="#4ab050" stroke="#bbb" stroke-width="0.9"/>
<circle cx="299.9" cy="336.9" r="6.6" fill="#f2f2f2" stroke="#6a6a6a" stroke-width="1.1"/><circle cx="299.9" cy="336.9" r="5" fill="#2e9a3e"/><path d="M299.9 340.5v-7M296.5 336.5l3.4-3.6 3.4 3.6" stroke="#fff" stroke-width="2" fill="none"/>
<circle cx="322.9" cy="336.9" r="6.6" fill="#f2f2f2" stroke="#6a6a6a" stroke-width="1.1"/><circle cx="322.9" cy="336.9" r="5" fill="#2e9a3e"/><path d="M322.9 333.3v7M319.5 337.3l3.4 3.6 3.4-3.6" stroke="#fff" stroke-width="2" fill="none"/>
<path d="M313.4 369.5l3.3 3.3 3.3-3.3" stroke="#555" stroke-width="1.5" fill="none"/>
<path d="M313.4 518.7l3.3 3.3 3.3-3.3" stroke="#555" stroke-width="1.5" fill="none"/>
<rect x="277" y="353" width="1.5" height="37" fill="#e4e4e4"/><rect x="277" y="502" width="1.5" height="37" fill="#e4e4e4"/>
<g fill="#aaa"><rect x="342.5" y="517" width="1" height="1"/><rect x="342.5" y="519" width="1" height="1"/><rect x="342.5" y="521" width="1" height="1"/><rect x="342.5" y="523" width="1" height="1"/><rect x="342.5" y="525" width="1" height="1"/><rect x="342.5" y="527" width="1" height="1"/><rect x="342.5" y="529" width="1" height="1"/><rect x="342.5" y="531" width="1" height="1"/></g>
</svg>
<div class="a" style="left:23px;top:349px;width:254px;height:680px;background:#fff;border:1px solid #a0a0a0;overflow:hidden">
<svg style="left:-24px;top:-350px" width="300" height="1100">
<g clip-path="inset(0)"></g>
<path d="M34 354l12 2v11l-12-2z" fill="#e8eef2" stroke="#9aa8b4" stroke-width="0.8"/><path d="M37 359l3.5 5 6-8" fill="none" stroke="#33bb22" stroke-width="2.6"/>
<path d="M34 377l12 2v11l-12-2z" fill="#e8eef2" stroke="#9aa8b4" stroke-width="0.8"/><path d="M37 382l3.5 5 6-8" fill="none" stroke="#33bb22" stroke-width="2.6"/>
<path d="M34 400l12 2v11l-12-2z" fill="#e8eef2" stroke="#9aa8b4" stroke-width="0.8"/><path d="M37 405l3.5 5 6-8" fill="none" stroke="#33bb22" stroke-width="2.6"/>
<path d="M34 423l12 2v11l-12-2z" fill="#e8eef2" stroke="#9aa8b4" stroke-width="0.8"/><path d="M37 428l3.5 5 6-8" fill="none" stroke="#33bb22" stroke-width="2.6"/>
<rect x="34" y="447.5" width="10" height="13" rx="1" fill="#d89a2a"/><rect x="35.5" y="449" width="7" height="10" fill="#e8eef4"/><rect x="37" y="446" width="4" height="2.5" fill="#888"/><path d="M39.5 457l2.5 2.5 5-5" fill="none" stroke="#22aa22" stroke-width="2.4"/>
<rect x="34" y="472" width="12" height="13" fill="#fff" stroke="#999" stroke-width="0.9"/><rect x="34" y="472" width="12" height="3.5" fill="#e03030"/><text x="40" y="483.5" font-size="7" font-weight="bold" text-anchor="middle" fill="#222" font-family="Liberation Sans">15</text>
<rect x="34" y="495" width="12" height="13" fill="#fff" stroke="#999" stroke-width="0.9"/><rect x="34" y="495" width="12" height="3.5" fill="#e03030"/><text x="40" y="506.5" font-size="7" font-weight="bold" text-anchor="middle" fill="#222" font-family="Liberation Sans">15</text>
<rect x="34" y="518" width="11" height="13" fill="#eef2f5" stroke="#b8c2ca" stroke-width="0.8"/><text x="39.5" y="528" font-size="9" font-weight="bold" text-anchor="middle" fill="#444" font-family="Liberation Sans">01</text>
<rect x="34" y="541" width="11" height="13" fill="#eef2f5" stroke="#b8c2ca" stroke-width="0.8"/><text x="39.5" y="551" font-size="9" font-weight="bold" text-anchor="middle" fill="#444" font-family="Liberation Sans">01</text>
<rect x="34" y="564" width="11" height="13" fill="#eef2f5" stroke="#b8c2ca" stroke-width="0.8"/><text x="39.5" y="574.5" font-size="10" font-weight="bold" text-anchor="middle" fill="#444" font-family="Liberation Sans">T</text>
<rect x="34" y="589" width="10" height="10" fill="#dfeaf4" stroke="#8aa" stroke-width="0.8"/><path d="M37 597l8-9" stroke="#666" stroke-width="1.2"/>
<rect x="34" y="610.5" width="11" height="13" rx="1" fill="#d89a2a"/><rect x="35.5" y="612" width="8" height="10" fill="#f4f0e0"/><rect x="37.5" y="609" width="4" height="2.5" fill="#888"/><path d="M37 615h5M37 617.5h5M37 620h5" stroke="#6a8" stroke-width="1"/>
<rect x="33" y="634" width="14" height="11" rx="1.5" fill="#2c3a50" stroke="#d4a820" stroke-width="1"/><rect x="37" y="637.5" width="6" height="4" fill="#e0c060"/>
<rect x="36" y="657" width="8" height="11" fill="#e4ecf2" stroke="#8a9aa8" stroke-width="0.8"/><path d="M38 660h4M38 662h4M38 664h4M38 666h4" stroke="#b8a040" stroke-width="0.8"/>
<g fill="#111"><rect x="38" y="679" width="8" height="4"/><rect x="33" y="682" width="13" height="4"/><rect x="33" y="687" width="13" height="5"/><rect x="35" y="680" width="3" height="3"/></g><path d="M36 686.5h9M36 689h9" stroke="#fff" stroke-width="0.8"/>
<rect x="34" y="702.5" width="10" height="12" fill="#fff" stroke="#3a7a3a" stroke-width="1.2"/><path d="M36 706h4M36 709h4M36 712h4" stroke="#3a7a3a" stroke-width="1"/><path d="M41 705.5l1.5 1.5 3-3M41 708.5l1.5 1.5 3-3M41 711.5l1.5 1.5 3-3" fill="none" stroke="#2a9a2a" stroke-width="1.1"/>
<rect x="33" y="724.5" width="14" height="14" fill="#111"/><rect x="35" y="727" width="4.5" height="7" fill="#fff"/><rect x="40.5" y="729" width="4.5" height="7" fill="#fff"/>
<rect x="32" y="748" width="15" height="13" fill="#5a2a90"/><path d="M35 751.5l3 2.5-3 2.5M39 758h5" stroke="#fff" stroke-width="1.1" fill="none"/>
<path d="M32 783l9-5 6 3-9 5z" fill="#c8a050" stroke="#8a6a30" stroke-width="0.8"/><path d="M38 772v5h-2.5l4 4 4-4h-2.5v-5z" fill="#30b030"/>
<g opacity="1"><rect x="32" y="796" width="7" height="7" fill="#1a3aa0"/><rect x="39" y="796" width="7" height="7" fill="#e03a20"/><rect x="32" y="803" width="7" height="7" fill="#e03a20"/><rect x="39" y="803" width="7" height="7" fill="#1a2a80"/></g>
<path d="M32 830l3-4 10-5 1.5 2-10 6z" fill="#333"/><path d="M35 826.5l10-5" stroke="#ccc" stroke-width="0.7"/><path d="M32 830l3-4 1.5 2z" fill="#d8a040"/>
<path d="M32 853l3-4 10-5 1.5 2-10 6z" fill="#333"/><path d="M35 849.5l10-5" stroke="#ccc" stroke-width="0.7"/><path d="M32 853l3-4 1.5 2z" fill="#d8a040"/>
<path d="M32 876l3-4 10-5 1.5 2-10 6z" fill="#333"/><path d="M35 872.5l10-5" stroke="#ccc" stroke-width="0.7"/><path d="M32 876l3-4 1.5 2z" fill="#d8a040"/>
<rect x="34" y="888.5" width="10" height="13" rx="1" fill="#d89a2a"/><rect x="35.5" y="890" width="7" height="10" fill="#e8eef4"/><rect x="37" y="887" width="4" height="2.5" fill="#888"/><path d="M39.5 898l2.5 2.5 5-5" fill="none" stroke="#22aa22" stroke-width="2.4"/>
<path d="M33 917v6h14v-6" fill="none" stroke="#778" stroke-width="1"/><rect x="36" y="912" width="3" height="9" rx="1.5" fill="#fff" stroke="#3a7ab8" stroke-width="1"/><rect x="41" y="912" width="3" height="9" rx="1.5" fill="#fff" stroke="#3a7ab8" stroke-width="1"/>
<g opacity="0.4"><rect x="32" y="934" width="7" height="7" fill="#1a3aa0"/><rect x="39" y="934" width="7" height="7" fill="#e03a20"/><rect x="32" y="941" width="7" height="7" fill="#e03a20"/><rect x="39" y="941" width="7" height="7" fill="#1a2a80"/></g>
<path d="M36 957h6l2 2v11h-8z" fill="#cfe0f0"/>
<rect x="36" y="983" width="8" height="11" fill="#e4ecf2" stroke="#8a9aa8" stroke-width="0.8"/><path d="M38 986h4M38 988h4M38 990h4M38 992h4" stroke="#b8a040" stroke-width="0.8"/>
<rect x="34" y="1006" width="12" height="11" fill="#dfe8f0" stroke="#9ab" stroke-width="0.8"/>
<rect x="55" y="440" width="219" height="1" fill="#d4d4d4"/>
<rect x="55" y="465" width="219" height="1" fill="#d4d4d4"/>
<rect x="55" y="766" width="219" height="1" fill="#d4d4d4"/>
<rect x="55" y="975" width="219" height="1" fill="#d4d4d4"/>
</svg>
<div class="t" style="left:32px;top:26.80000000000001px;font-size:12px;color:#363636">Task List</div>
<div class="t" style="left:32px;top:49.80000000000001px;font-size:12px;color:#363636">Capture New Material</div>
<div class="t" style="left:32px;top:72.80000000000001px;font-size:12px;color:#363636">Composer Step</div>
<div class="t" style="left:32px;top:97.80000000000001px;font-size:12px;color:#363636">Basic Instruction Activity</div>
<div class="t" style="left:32px;top:122.80000000000001px;font-size:12px;color:#363636">Collect a Date / Time Activity</div>
<div class="t" style="left:32px;top:145.8px;font-size:12px;color:#363636">Collect a Date / Time Range Activity</div>
<div class="t" style="left:32px;top:168.79999999999995px;font-size:12px;color:#363636">Collect a Number Activity</div>
<div class="t" style="left:32px;top:191.79999999999995px;font-size:12px;color:#363636">Collect a Number Range Activity</div>
<div class="t" style="left:32px;top:214.79999999999995px;font-size:12px;color:#363636">Collect Text Activity</div>
<div class="t" style="left:32px;top:237.79999999999995px;font-size:12px;color:#363636">Collect True False Activity</div>
<div class="t" style="left:32px;top:260.79999999999995px;font-size:12px;color:#363636">Collect List Activity</div>
<div class="t" style="left:32px;top:283.79999999999995px;font-size:12px;color:#363636">Display a Webform Activity</div>
<div class="t" style="left:32px;top:306.79999999999995px;font-size:12px;color:#363636">Attach File Activity</div>
<div class="t" style="left:32px;top:329.79999999999995px;font-size:12px;color:#363636">Database Data Collection</div>
<div class="t" style="left:32px;top:352.79999999999995px;font-size:12px;color:#363636">Spreadsheet Collection Activity</div>
<div class="t" style="left:32px;top:375.79999999999995px;font-size:12px;color:#363636">Specification Data Collection Activity</div>
<div class="t" style="left:32px;top:398.79999999999995px;font-size:12px;color:#363636">Execute Command Activity</div>
<div class="t" style="left:32px;top:423.79999999999995px;font-size:12px;color:#363636">Load Carrier Activity</div>
<div class="t" style="left:32px;top:446.79999999999995px;font-size:12px;color:#363636">Sub-Assembly Activity</div>
<div class="t" style="left:32px;top:469.79999999999995px;font-size:12px;color:#363636">Capture Unit Housing Activity</div>
<div class="t" style="left:32px;top:492.79999999999995px;font-size:12px;color:#363636">Capture Unit Alias Activity</div>
<div class="t" style="left:32px;top:515.8px;font-size:12px;color:#363636">Capture Materials Activity</div>
<div class="t" style="left:32px;top:538.8px;font-size:12px;color:#363636">Validate Captured Material Activity</div>
<div class="t" style="left:32px;top:561.8px;font-size:12px;color:#363636">Take a Sample Activity</div>
<div class="t" style="left:32px;top:584.8px;font-size:12px;color:#b0b0b0">Unit Configuration Activity</div>
<div class="t" style="left:32px;top:607.8px;font-size:12px;color:#363636">Generate Specimen Activity</div>
<div class="t" style="left:32px;top:632.8px;font-size:12px;color:#363636">Generate Report Activity</div>
<div class="a" style="left:0;top:0;width:252px;height:15px;background:#fff;border-bottom:1px solid #b8b8b8"></div>
<svg style="left:0;top:0" width="252" height="15"><path d="M122.5 8.5l3.5-3.5 3.5 3.5" stroke="#444" stroke-width="1.5" fill="none"/></svg>
</div>
<!--/LEFTFRAG-->
</body></html>
